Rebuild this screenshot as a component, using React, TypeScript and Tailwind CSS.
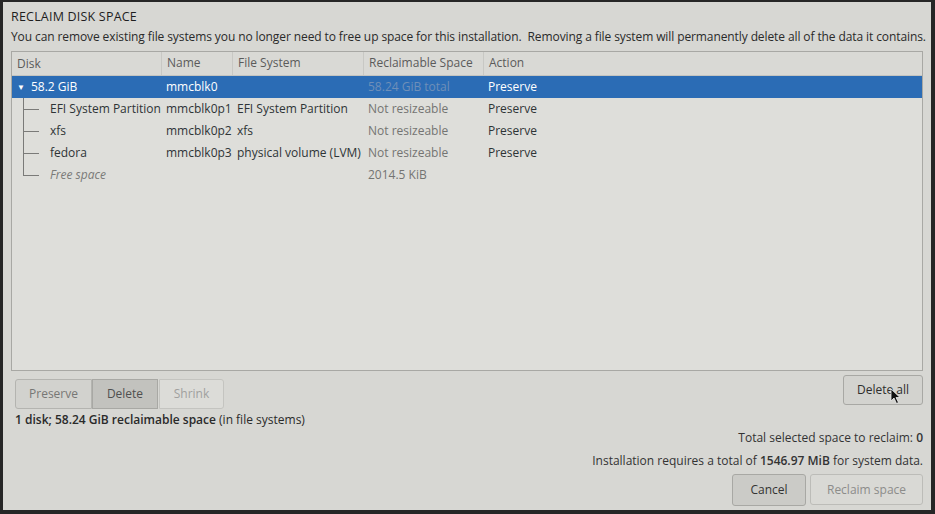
import React from "react";

const rows = [
  { disk: "EFI System Partition", name: "mmcblk0p1", fs: "EFI System Partition", space: "Not resizeable", action: "Preserve" },
  { disk: "xfs", name: "mmcblk0p2", fs: "xfs", space: "Not resizeable", action: "Preserve" },
  { disk: "fedora", name: "mmcblk0p3", fs: "physical volume (LVM)", space: "Not resizeable", action: "Preserve" },
];

const cols = "grid grid-cols-[149px_71px_131px_120px_1fr]";

function TreeLine({ last }: { last?: boolean }) {
  return (
    <div className="relative h-full w-[38px] shrink-0">
      <div className={`absolute left-[11px] top-0 w-px bg-[#7a7a78] ${last ? "h-[11px]" : "h-full"}`} />
      <div className="absolute left-[11px] top-[11px] h-px w-[16px] bg-[#7a7a78]" />
    </div>
  );
}

function Cursor() {
  return (
    <svg className="absolute left-[46px] top-[12px]" width="11" height="17" viewBox="0 0 11 17">
      <path d="M1 1 L1 13 L4 10 L6.5 15.5 L8.5 14.5 L6 9.5 L10 9.5 Z" fill="#111" stroke="#eee" strokeWidth="0.8" />
    </svg>
  );
}

export default function App() {
  return (
    <div className="h-[514px] w-[935px] bg-[#262626] pl-[3px] pr-[4px] pt-[2px] pb-[4px] font-['Open_Sans',sans-serif]">
      <div className="flex h-full flex-col bg-[#d7d7d3] px-[8px] text-[#2e3436]">
        <h1 className="mt-[6px] text-[12.5px] leading-[18px] tracking-[0.2px] text-[#1e1e1e]">RECLAIM DISK SPACE</h1>
        <p className="mt-[3px] whitespace-nowrap text-[12px] leading-[16px] tracking-[-0.1px] text-[#2a2a2a]">
          You can remove existing file systems you no longer need to free up space for this installation.&nbsp; Removing a file system will permanently delete all of the data it contains.
        </p>

        <div className="mt-[6px] h-[320px] border border-[#a8a8a4] bg-[#dededa] text-[12px]">
          <div className={`${cols} h-[24px] items-center border-b border-[#c4c4c0] bg-[#d9d9d5] text-[#5b5b5b]`}>
            <div className="pl-[5px]">Disk</div>
            <div className="h-full border-l border-[#c8c8c4] pl-[5px] leading-[21px]">Name</div>
            <div className="h-full border-l border-[#c8c8c4] pl-[5px] leading-[21px]">File System</div>
            <div className="h-full border-l border-[#c8c8c4] pl-[5px] leading-[21px]">Reclaimable Space</div>
            <div className="h-full border-l border-[#c8c8c4] pl-[5px] leading-[21px]">Action</div>
          </div>

          <div className={`${cols} h-[22px] items-center bg-[#2b6cb5] text-white`}>
            <div className="flex items-center pl-[5px]">
              <span className="mr-[6px] text-[8px]">▼</span>58.2 GiB
            </div>
            <div className="pl-[5px]">mmcblk0</div>
            <div />
            <div className="pl-[5px] text-[#6f8fb8]">58.24 GiB total</div>
            <div className="pl-[5px]">Preserve</div>
          </div>

          {rows.map((r) => (
            <div key={r.name} className={`${cols} h-[22px] items-center`}>
              <div className="flex h-full items-center">
                <TreeLine />
                <span className="whitespace-nowrap">{r.disk}</span>
              </div>
              <div className="pl-[5px]">{r.name}</div>
              <div className="whitespace-nowrap pl-[5px]">{r.fs}</div>
              <div className="pl-[5px] text-[#747472]">{r.space}</div>
              <div className="pl-[5px]">{r.action}</div>
            </div>
          ))}

          <div className={`${cols} h-[22px] items-center`}>
            <div className="flex h-full items-center">
              <TreeLine last />
              <span className="italic text-[#7a7a78]">Free space</span>
            </div>
            <div />
            <div />
            <div className="pl-[5px] text-[#747472]">2014.5 KiB</div>
            <div />
          </div>
        </div>

        <div className="mt-[4px] flex items-start justify-between text-[12px]">
          <div className="ml-[4px] mt-[4px] flex">
            <button className="h-[30px] w-[77px] rounded-l-[3px] border border-[#b4b4b0] bg-[#d2d2ce] text-[#777775]">Preserve</button>
            <button className="h-[30px] w-[66px] border border-[#a8a8a4] bg-[#c2c2be] text-[#4f4f4f]">Delete</button>
            <button className="ml-[1px] h-[30px] w-[65px] rounded-r-[3px] border border-[#c4c4c0] bg-[#dcdcd8] text-[#a0a09e]">Shrink</button>
          </div>
          <button className="relative h-[30px] w-[80px] rounded-[3px] border border-[#a8a8a4] bg-[#d3d3cf] text-[#2e2e2e]">
            Delete all
            <Cursor />
          </button>
        </div>

        <p className="ml-[4px] mt-[3px] text-[12px] leading-[16px] text-[#2a2a2a]">
          <span className="font-semibold">1 disk; 58.24 GiB reclaimable space</span> (in file systems)
        </p>

        <div className="mt-[2px] flex flex-col items-end text-[12px] text-[#333]">
          <p className="leading-[16px]">
            Total selected space to reclaim: <span className="font-semibold">0</span>
          </p>
          <p className="mt-[7px] leading-[16px]">
            Installation requires a total of <span className="font-semibold">1546.97 MiB</span> for system data.
          </p>
          <div className="mt-[5px] flex gap-[4px]">
            <button className="h-[32px] w-[74px] rounded-[3px] border border-[#a8a8a4] bg-[#cbcbc7] text-[#333]">Cancel</button>
            <button className="h-[31px] w-[113px] rounded-[3px] border border-[#bcbcb8] bg-[#d9d9d5] text-[#8c8c8a]">Reclaim space</button>
          </div>
        </div>
      </div>
    </div>
  );
}
